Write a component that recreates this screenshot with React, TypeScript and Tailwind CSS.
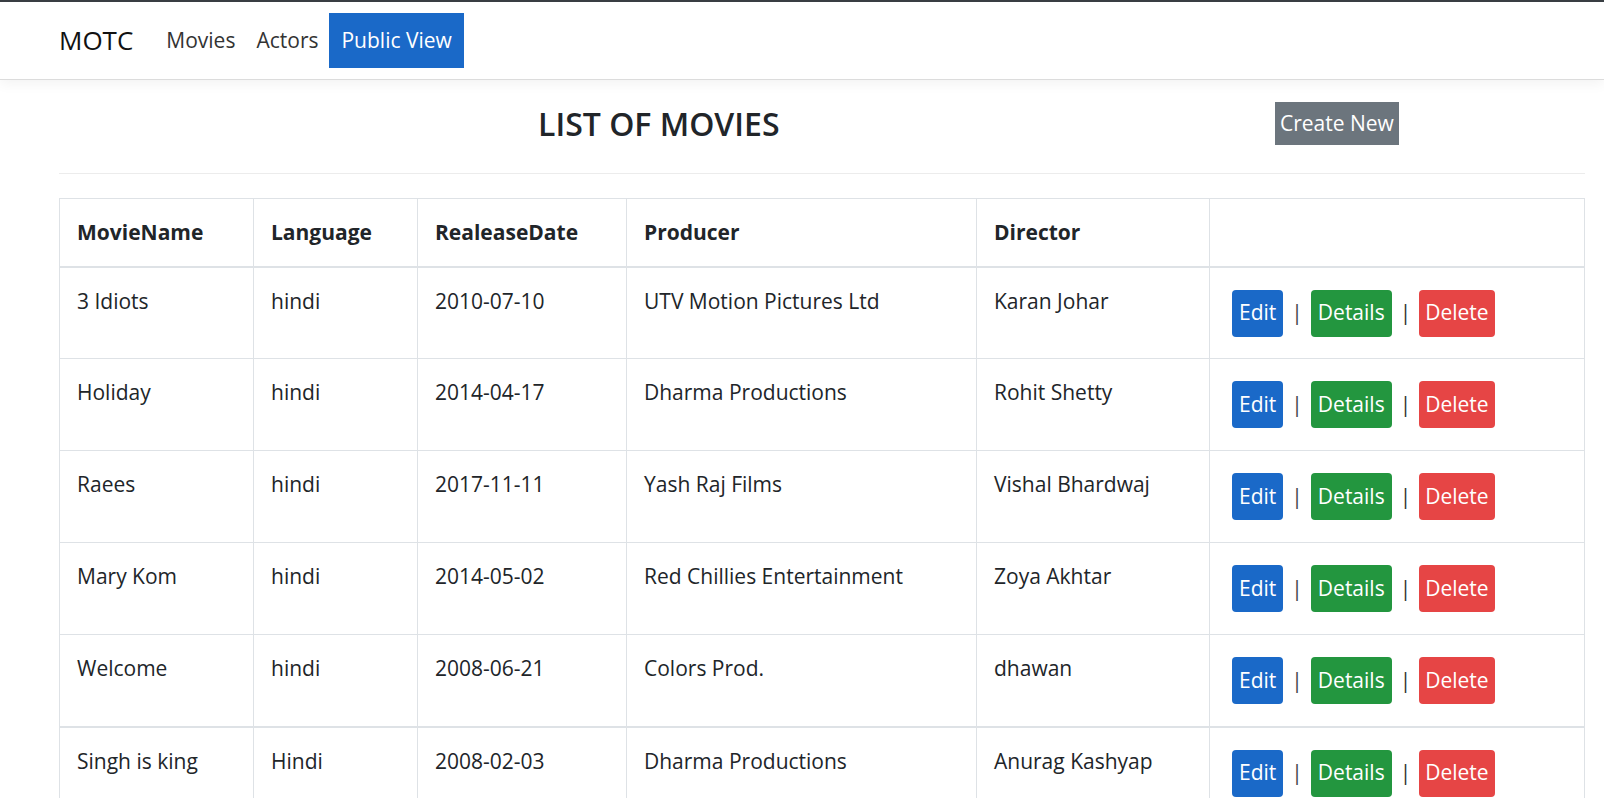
import React from 'react';

const movies = [
  { name: '3 Idiots', language: 'hindi', date: '2010-07-10', producer: 'UTV Motion Pictures Ltd', director: 'Karan Johar' },
  { name: 'Holiday', language: 'hindi', date: '2014-04-17', producer: 'Dharma Productions', director: 'Rohit Shetty' },
  { name: 'Raees', language: 'hindi', date: '2017-11-11', producer: 'Yash Raj Films', director: 'Vishal Bhardwaj' },
  { name: 'Mary Kom', language: 'hindi', date: '2014-05-02', producer: 'Red Chillies Entertainment', director: 'Zoya Akhtar' },
  { name: 'Welcome', language: 'hindi', date: '2008-06-21', producer: 'Colors Prod.', director: 'dhawan' },
  { name: 'Singh is king', language: 'Hindi', date: '2008-02-03', producer: 'Dharma Productions', director: 'Anurag Kashyap' },
];

const headers = ['MovieName', 'Language', 'RealeaseDate', 'Producer', 'Director', ''];

const App = () => {
  return (
    <div className="min-h-screen bg-white text-[#212529] font-['Segoe_UI','Open_Sans',sans-serif] border-t-2 border-[#3a3f44]">
      <nav className="h-[78px] border-b border-[#dcdcdc] shadow-[0_4px_12px_rgba(0,0,0,0.05)] bg-white">
        <div className="flex items-center h-full pl-[59px]">
          <span className="text-[26px] text-[#111] mr-[23px]">MOTC</span>
          <a className="px-[10px] py-[10px] text-[21px] text-[#333]">Movies</a>
          <a className="pl-[11px] pr-[10px] py-[10px] text-[21px] text-[#333]">Actors</a>
          <a className="h-[55px] flex items-center ml-[1px] px-[12px] text-[21px] text-white bg-[#1a69c8]">Public View</a>
        </div>
      </nav>

      <main className="pl-[59px] pr-[19px]">
        <div className="flex items-center h-[94px] border-b border-[#ececec] pb-[6px]">
          <div className="w-[1216px] pl-[479px]">
            <h2 className="text-[32px] font-semibold text-[#212529] leading-none">LIST OF MOVIES</h2>
          </div>
          <button className="bg-[#6c757d] text-white text-[21px] px-[5px] h-[43px] leading-none">
            Create New
          </button>
        </div>

        <table className="mt-[24px] w-[1526px] table-fixed border-collapse border border-[#dee2e6] text-[21px]">
          <colgroup>
            <col className="w-[194px]" />
            <col className="w-[164px]" />
            <col className="w-[209px]" />
            <col className="w-[350px]" />
            <col className="w-[233px]" />
            <col />
          </colgroup>
          <thead>
            <tr className="h-[68px] border-b-2 border-[#dee2e6]">
              {headers.map((h, i) => (
                <th key={i} className="text-left font-bold px-[17px] border-x border-[#dee2e6] align-middle">
                  {h}
                </th>
              ))}
            </tr>
          </thead>
          <tbody>
            {movies.map((m, i) => (
              <tr key={i} className={`h-[92px] ${i === 5 ? 'border-t-2' : 'border-t'} border-[#dee2e6]`}>
                <td className="px-[17px] pt-[18px] align-top border-x border-[#dee2e6]">{m.name}</td>
                <td className="px-[17px] pt-[18px] align-top border-x border-[#dee2e6]">{m.language}</td>
                <td className="px-[17px] pt-[18px] align-top border-x border-[#dee2e6]">{m.date}</td>
                <td className="px-[17px] pt-[18px] align-top border-x border-[#dee2e6]">{m.producer}</td>
                <td className="px-[17px] pt-[18px] align-top border-x border-[#dee2e6]">{m.director}</td>
                <td className="pl-[22px] pt-[22px] align-top border-x border-[#dee2e6]">
                  <div className="flex items-center">
                    <button className="h-[47px] px-[7px] rounded-[4px] bg-[#1a69c8] text-white">Edit</button>
                    <span className="mx-[8px] text-[#444]">|</span>
                    <button className="h-[47px] px-[7px] rounded-[4px] bg-[#23963f] text-white">Details</button>
                    <span className="mx-[8px] text-[#333]">|</span>
                    <button className="h-[47px] px-[6px] rounded-[4px] bg-[#e64545] text-white">Delete</button>
                  </div>
                </td>
              </tr>
            ))}
          </tbody>
        </table>
      </main>
    </div>
  );
};

export default App;
